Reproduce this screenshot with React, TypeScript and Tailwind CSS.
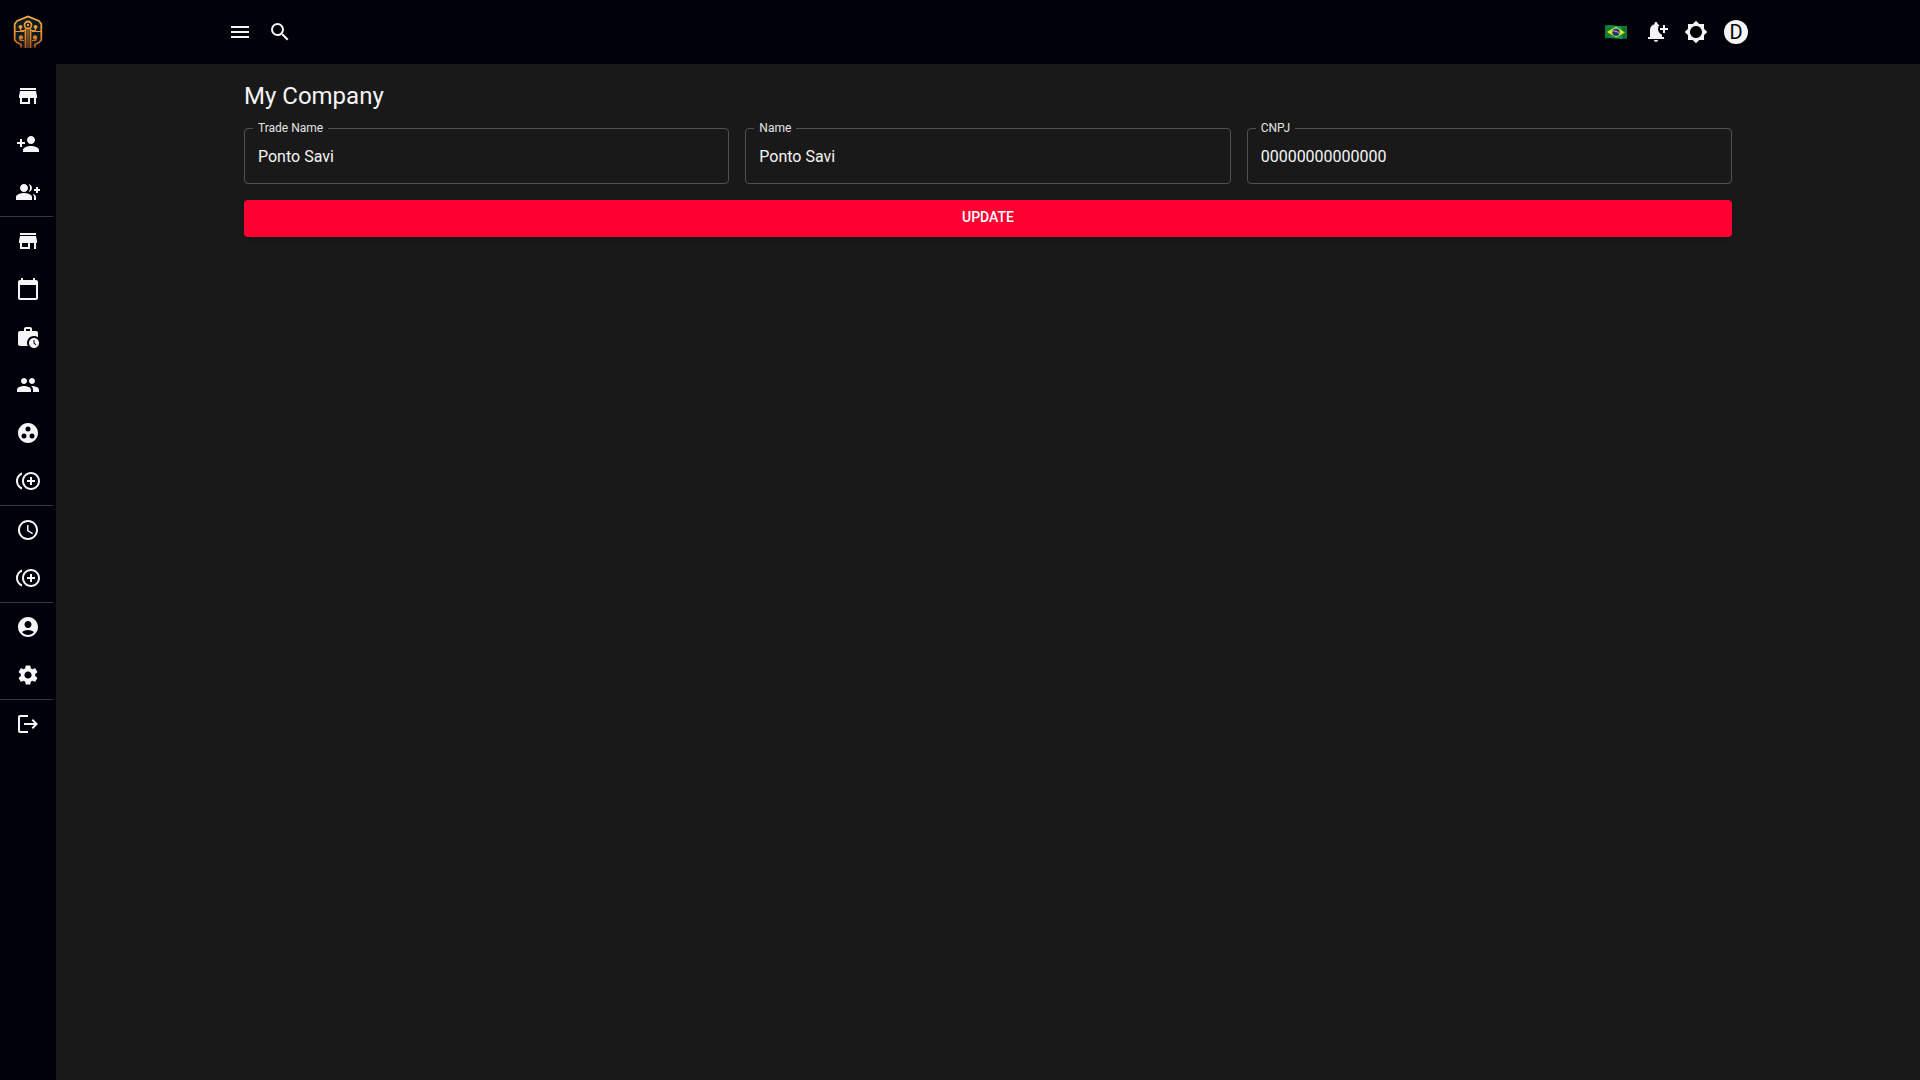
import { useId, useState } from "react";
import type { IconType } from "react-icons";
import {
  MdAccessTime,
  MdAccountCircle,
  MdBrightness5,
  MdCalendarToday,
  MdControlPointDuplicate,
  MdGroupAdd,
  MdGroupWork,
  MdLogout,
  MdMenu,
  MdNotificationAdd,
  MdPeople,
  MdPersonAdd,
  MdSearch,
  MdSettings,
  MdStore,
  MdWorkHistory,
} from "react-icons/md";

type Item = { label: string; icon: IconType };

const groups: Item[][] = [
  [
    { label: "Create company", icon: MdStore },
    { label: "Create user", icon: MdPersonAdd },
    { label: "Create group", icon: MdGroupAdd },
  ],
  [
    { label: "Company", icon: MdStore },
    { label: "Calendar", icon: MdCalendarToday },
    { label: "Work history", icon: MdWorkHistory },
    { label: "Users", icon: MdPeople },
    { label: "Teams", icon: MdGroupWork },
    { label: "Extra records", icon: MdControlPointDuplicate },
  ],
  [
    { label: "Clock", icon: MdAccessTime },
    { label: "Add record", icon: MdControlPointDuplicate },
  ],
  [
    { label: "Profile", icon: MdAccountCircle },
    { label: "Settings", icon: MdSettings },
  ],
  [{ label: "Log out", icon: MdLogout }],
];

function Logo() {
  return (
    <svg width="30" height="34" viewBox="0 0 30 34" fill="none" aria-hidden="true">
      <defs>
        <linearGradient id="gold" x1="0" y1="0" x2="0" y2="34" gradientUnits="userSpaceOnUse">
          <stop offset="0" stopColor="#f8b04e" />
          <stop offset="0.55" stopColor="#e58b2a" />
          <stop offset="1" stopColor="#b04c10" />
        </linearGradient>
      </defs>
      <path d="M15 1.5 4 6 1.5 9v16L5 28l4 1.5V33h12v-3.500l4-1.500 3.500-3V9L26 6z" fill="#0b1c22" />
      <g stroke="url(#gold)">
        <path d="M8 32.500v-3L4 27.500 1.700 25V9L4 6l11-4.500L26 6l2.300 3v16L26 27.500l-4 2v3" strokeWidth="1.800" />
        <circle cx="15" cy="10" r="3.500" strokeWidth="1.800" />
        <path d="M2 16.500h9M19 16.500h9M7.500 12v3.500H12M22.500 12v3.500H18M7 22v3.500h4M23 22v3.500h-4" strokeWidth="1" />
        <path d="M12.500 13.500V33M17.500 13.500V33" strokeWidth="1.800" />
        <path d="M15 14v19" strokeWidth="1" />
      </g>
      <g fill="url(#gold)">
        <circle cx="15" cy="10" r="1.200" />
        <circle cx="7.500" cy="12" r="2" />
        <circle cx="22.500" cy="12" r="2" />
        <circle cx="8" cy="22.500" r="2.200" />
        <circle cx="22" cy="22.500" r="2.200" />
      </g>
    </svg>
  );
}

function BrazilFlag() {
  return (
    <svg width="22" height="14" viewBox="0 0 22 14" aria-hidden="true">
      <defs>
        <linearGradient id="wave" x1="0" x2="1" y1="0" y2="0">
          <stop offset="0" stopColor="#0b7a35" />
          <stop offset="0.3" stopColor="#12883c" />
          <stop offset="0.7" stopColor="#17a04a" />
          <stop offset="0.85" stopColor="#0b6b2f" />
          <stop offset="1" stopColor="#0f7f39" />
        </linearGradient>
      </defs>
      <path d="M0 .5C4-.3 7 .2 11 .8s7 .5 11 0v12.700c-4 .6-7 .4-11 0S4 12.700 0 13.500z" fill="url(#wave)" />
      <path d="M2 7 11 1.800 20 7.500 11 12.300z" fill="#f0dc2e" />
      <circle cx="11" cy="7.200" r="3.700" fill="#1c3a78" />
      <path d="M7.600 6c2.400-.4 5 .5 6.800 2.600" stroke="#dfe6ee" strokeWidth=".8" fill="none" />
    </svg>
  );
}

function IconButton({ label, children }: { label: string; children: React.ReactNode }) {
  return (
    <button type="button" aria-label={label} className="flex size-10 items-center justify-center rounded-full hover:bg-white/10">
      {children}
    </button>
  );
}

function Field({ label, initial }: { label: string; initial: string }) {
  const id = useId();
  const [value, setValue] = useState(initial);
  return (
    <div className="relative h-14 rounded border border-[#515151] focus-within:border-white">
      <label
        htmlFor={id}
        className="absolute -top-[9px] left-2 bg-[#191919] px-[5px] text-xs leading-4 text-[#e4e4e4]"
      >
        {label}
      </label>
      <input
        id={id}
        value={value}
        onChange={(e) => setValue(e.target.value)}
        className="h-full w-full bg-transparent px-[13px] text-base text-[#f5f5f5] outline-none"
      />
    </div>
  );
}

export default function App() {
  return (
    <div className="flex min-h-screen bg-[#191919] font-[Roboto,sans-serif] text-[#f5f5f5]">
      <aside className="flex w-14 shrink-0 flex-col bg-[#01010b]">
        <a href="#" aria-label="Home" className="flex h-16 items-center justify-center">
          <Logo />
        </a>
        <nav className="mt-2 divide-y divide-[#38383c] pr-[3px]">
          {groups.map((group, i) => (
            <ul key={i}>
              {group.map(({ label, icon: Icon }) => (
                <li key={label}>
                  <a href="#" aria-label={label} className="flex h-12 items-center pl-4 hover:bg-white/10">
                    <Icon className="size-6 shrink-0" />
                  </a>
                </li>
              ))}
            </ul>
          ))}
        </nav>
      </aside>
      <div className="min-w-0 flex-1">
        <header className="bg-[#01010b]">
          <div className="mx-auto flex h-16 max-w-[1536px] items-center justify-between">
            <div className="flex">
              <IconButton label="Menu">
                <MdMenu className="size-6" />
              </IconButton>
              <IconButton label="Search">
                <MdSearch className="size-6" />
              </IconButton>
            </div>
            <div className="flex">
              <IconButton label="Language">
                <BrazilFlag />
              </IconButton>
              <IconButton label="Notifications">
                <MdNotificationAdd className="size-6" />
              </IconButton>
              <IconButton label="Theme">
                <MdBrightness5 className="size-6" />
              </IconButton>
              <IconButton label="Account">
                <span className="flex size-6 items-center justify-center rounded-full bg-[#f5f5f5] text-xl leading-none text-[#01010b]">
                  D
                </span>
              </IconButton>
            </div>
          </div>
        </header>
        <main className="mx-auto max-w-[1536px] px-6 pt-4">
          <h1 className="text-2xl font-normal">My Company</h1>
          <form onSubmit={(e) => e.preventDefault()} className="mt-4">
            <div className="grid grid-cols-3 gap-4">
              <Field label="Trade Name" initial="Ponto Savi" />
              <Field label="Name" initial="Ponto Savi" />
              <Field label="CNPJ" initial="00000000000000" />
            </div>
            <button
              type="submit"
              className="mt-4 flex h-[37px] w-full items-start justify-center rounded bg-[#ff0033] pt-[5px] text-sm leading-6 font-medium text-white uppercase shadow-md"
            >
              Update
            </button>
          </form>
        </main>
      </div>
    </div>
  );
}
